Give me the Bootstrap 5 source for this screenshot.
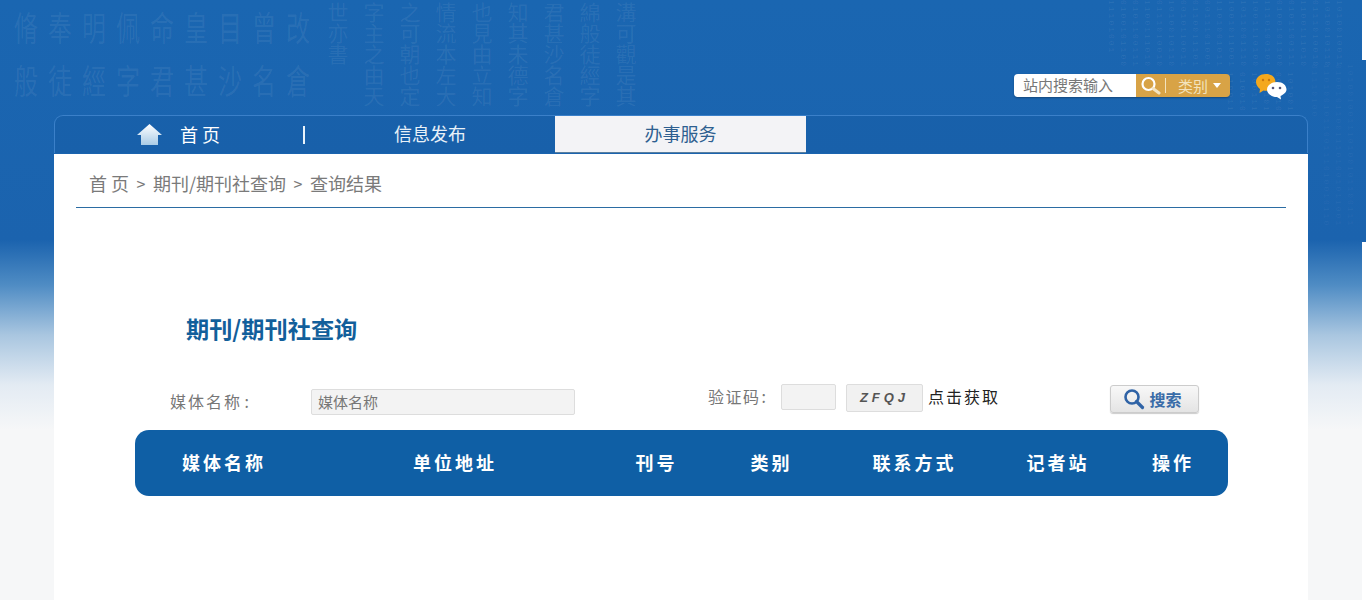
<!DOCTYPE html>
<html lang="zh-CN">
<head>
<meta charset="utf-8">
<title>期刊/期刊社查询</title>
<link href="https://cdn.jsdelivr.net/npm/bootstrap@5.3.0/dist/css/bootstrap.min.css" rel="stylesheet">
<style>
html,body{height:600px;overflow:hidden}
body{font-family:"Noto Sans CJK SC","Liberation Sans",sans-serif;color:#777;position:relative;
 background:linear-gradient(#fff 60px,transparent 60px,transparent 242px,#fff 242px) right top/4px 100% no-repeat,
 linear-gradient(#1a66b1 0,#1b63ae 240px,#4f8cc4 285px,#a9c6e0 335px,#e3ebf3 385px,#f6f7f8 430px) left top/100% 100% no-repeat}
.decor{position:absolute;inset:0 0 auto 0;height:115px;pointer-events:none}
.callig{position:absolute;left:14px;top:0;width:320px;font-size:24px;line-height:38px;letter-spacing:10px;color:rgba(255,255,255,.07);word-break:break-all;font-family:"Noto Sans CJK TC",serif;transform:scaleY(1.4);transform-origin:top}
.callig2{position:absolute;left:320px;top:2px;height:112px;writing-mode:vertical-rl;font-size:21px;line-height:36px;color:rgba(255,255,255,.07);font-family:"Noto Sans CJK TC",serif;word-break:break-all}
.binary{position:absolute;font:8px/12px "Liberation Mono",monospace;color:rgba(255,255,255,.09);letter-spacing:2px;writing-mode:vertical-rl;word-break:break-all}
.bin-a{left:1083px;top:0;height:72px;width:262px}
.bin-b{left:1236px;top:72px;height:42px;width:60px}
.bin-c{left:1312px;top:64px;height:170px;width:44px;opacity:.6}
.topbar{height:115px;position:relative}
.searchbox{left:1014px;top:74px;width:216px;height:23px;border-radius:4px;overflow:hidden;box-shadow:0 1px 2px rgba(0,0,0,.3)}
.searchtext{width:122px;background:#fff;color:#777;font-size:15px;padding-left:9px;line-height:22px}
.searchgold{flex:1;background:#d8a346;color:#f3e3bd;font-size:15px;line-height:22px}
.tick{width:1px;height:15px;background:#f3e3bd;margin:0 12px 0 3px}
.caret-d{width:0;height:0;border:4px solid transparent;border-top:5px solid #fff;border-bottom:0;margin-left:5px}
.wechat{left:1255px;top:73px}
.navstrip{margin:0 58px 0 54px;height:38px;border:1px solid #3b80c9;border-bottom:0;border-radius:9px 9px 0 0;background:rgba(20,90,160,.3);font-size:18px;color:#fff;position:relative}
.navcell{height:37px;line-height:35px;text-align:center}
.nav-home{width:248px;padding-left:82px;display:flex;align-items:center;gap:18px}
.nav-sep{width:2px;height:18px;background:#e8f3fb}
.nav-info{width:250px;color:#e8f1f8}
.nav-on{width:251px;background:#f3f3f6;color:#2e5f90;border-bottom:1px solid #5a7f9f}
.sheet{margin:1px 58px 0 54px;height:446px;background:#fff;padding:0 22px}
.crumbs{height:54px;border-bottom:1px solid #2b6ca3;padding-left:13px;font-size:18px;line-height:58px;color:#7a7a7a;gap:7.5px}
.crumbs span:nth-child(even){font-size:16px}
.qtitle{margin:105px 0 0 110px;font-size:23.2px;font-weight:700;line-height:30px;color:#125f9b}
.qform{margin:41px 0 0 94px;height:46px}
.lbl{font-size:16px;letter-spacing:2px;color:#777}
.lbl-name{width:141px;padding-top:4px;line-height:26px;height:30px;word-spacing:-3px}
.field{background:#f3f3f3;border:1px solid #ddd;border-radius:2px}
.field-name{width:264px;height:26px;margin-top:5px;font-size:15px;line-height:23px;padding-left:6px;color:#777}
.lbl-code{width:73px;margin-left:133px;letter-spacing:1.5px;line-height:25px;word-spacing:-4px}
.field-code{width:55px;height:26px}
.captcha{width:77px;height:28px;margin-left:10px;background:#f1f1f1;border:1px solid #ddd;border-radius:2px;font:italic 700 13px/26px "Liberation Sans",sans-serif;letter-spacing:4px;color:#555;text-align:center}
.getcode{margin-left:5px;color:#222;font-size:16px;letter-spacing:2px;line-height:24px;width:182px;white-space:nowrap}
.qbtn{width:89px;height:28px;margin-top:1px;padding:0 4px 0 0;border:1px solid #ccc;border-radius:3px;background:linear-gradient(#f8f8f8,#e4e4e4);color:#3a6ca8;font-size:16px;font-weight:700;line-height:26px;box-shadow:0 1px 1px rgba(0,0,0,.2)}
.qtable{width:1093px;margin-left:59px;height:66px;background:#0f5fa5;border-radius:14px;color:#fff;table-layout:fixed;border-collapse:separate;border-spacing:0}
.qtable th{font-size:18px;font-weight:700;letter-spacing:3px;text-align:center;padding:0 0 2px}
.qtable th:first-child{padding-left:4px}
</style>
</head>
<body>
<div class="decor" aria-hidden="true">
<div class="callig">脩奉明佩命皇目曾改般徒經字君甚沙名倉</div>
<div class="callig2">溝可觀是其綿般徒經字君甚沙名倉知其未德字也見由立知情流本左大之可朝也定字主之由天世亦書</div>
<div class="binary bin-a">101001001110100101100111010010110011101001011001110100101100111010010110011101001011001110100101100111010010110011101001011001110100101100111010010110011101001011001110100101100111010010110011101001</div>
<div class="binary bin-b">1010010011101001011001110100101100111010</div>
<div class="binary bin-c">10100100111010010110011101001011001110100101100111010010110011101001011001110100</div>
</div>
<header class="topbar">
<div class="searchbox position-absolute d-flex">
<div class="searchtext">站内搜索输入</div>
<div class="searchgold d-flex align-items-center ps-1">
<svg width="22" height="19" viewBox="0 0 22 19"><circle cx="8.500" cy="8" r="6" fill="none" stroke="#fff" stroke-width="2.200"/><path d="M13 12.500l6 4.500" stroke="#f4e4c0" stroke-width="3" stroke-linecap="round"/></svg>
<span class="tick"></span><span>类别</span><span class="caret-d"></span>
</div>
</div>
<svg class="wechat position-absolute" width="33" height="27" viewBox="0 0 33 27"><path d="M11 1C5 1 1 4.500 1 9c0 3 2 5.500 4 7l-.5 4 4-2.500c5 1 12-1 12-8C20.500 4.500 17 1 11 1z" fill="#f4a81d"/><path d="M22 9c-6 0-10 3.500-10 7.500s4 7.500 10 7.500l4 2.500-.5-3.500c3-1.500 6-3.500 6-6.500C31.500 12.500 28 9 22 9z" fill="#fff"/><circle cx="8" cy="7" r="1.200" fill="#c9780f"/><circle cx="14" cy="7" r="1.200" fill="#c9780f"/><circle cx="18" cy="15" r="1.300" fill="#557"/><circle cx="25" cy="15" r="1.300" fill="#557"/></svg>
</header>
<nav class="navstrip d-flex" aria-label="主导航">
<div class="navcell nav-home">
<svg width="25" height="21" viewBox="0 0 25 21"><defs><linearGradient id="hg" x1="0" y1="0" x2="0" y2="1"><stop offset="0" stop-color="#fff"/><stop offset="1" stop-color="#a9cbe6"/></linearGradient></defs><path d="M12.500 0L25 11h-4v10H4V11H0z" fill="url(#hg)"/></svg>
<span>首 页</span>
</div>
<div class="d-flex align-items-center"><span class="nav-sep"></span></div>
<div class="navcell nav-info">信息发布</div>
<div class="navcell nav-on">办事服务</div>
</nav>
<main class="sheet">
<div class="crumbs d-flex"><span>首 页</span><span>&gt;</span><span>期刊/期刊社查询</span><span>&gt;</span><span>查询结果</span></div>
<h1 class="qtitle">期刊/期刊社查询</h1>
<form class="qform d-flex align-items-start">
<div class="lbl lbl-name">媒体名称 :</div>
<div class="field field-name">媒体名称</div>
<div class="lbl lbl-code">验证码 :</div>
<div class="field field-code"></div>
<div class="captcha">ZFQJ</div>
<div class="getcode">点击获取</div>
<button type="button" class="qbtn d-flex align-items-center justify-content-center gap-1">
<svg width="22" height="22" viewBox="0 0 22 22"><circle cx="9" cy="9" r="6.500" fill="none" stroke="#2f63a6" stroke-width="2.600"/><path d="M13.500 13.500l6 6" stroke="#2f63a6" stroke-width="3.200" stroke-linecap="round"/></svg><span>搜索</span></button>
</form>
<table class="qtable">
<colgroup><col style="width:174px"><col style="width:292px"><col style="width:111px"><col style="width:119px"><col style="width:167px"><col style="width:120px"><col style="width:110px"></colgroup>
<thead><tr><th>媒体名称</th><th>单位地址</th><th>刊号</th><th>类别</th><th>联系方式</th><th>记者站</th><th>操作</th></tr></thead>
</table>
</main>
</body>
</html>
